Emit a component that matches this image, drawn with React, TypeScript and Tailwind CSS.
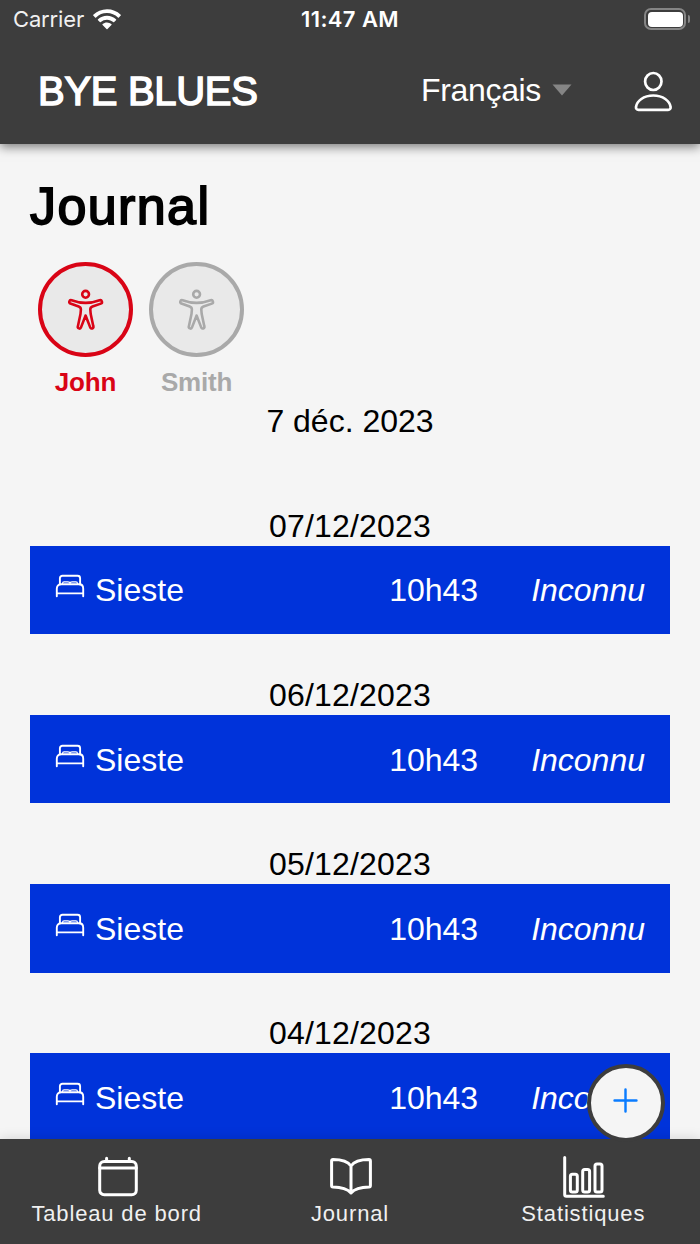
import type { ReactNode } from 'react';
import { IoAddOutline } from 'react-icons/io5';

type Entry = {
  date: string;
  label: string;
  time: string;
  status: string;
};

const entries: Entry[] = [
  { date: '07/12/2023', label: 'Sieste', time: '10h43', status: 'Inconnu' },
  { date: '06/12/2023', label: 'Sieste', time: '10h43', status: 'Inconnu' },
  { date: '05/12/2023', label: 'Sieste', time: '10h43', status: 'Inconnu' },
  { date: '04/12/2023', label: 'Sieste', time: '10h43', status: 'Inconnu' },
];

function PersonIcon() {
  return (
    <svg viewBox="0 0 40 42" className="h-[42px] w-10 shrink-0 fill-none stroke-current stroke-[2.7]">
      <ellipse cx="20.300" cy="11.500" rx="8.200" ry="8.500" />
      <path d="M5.500 39.800h29.600c1.800 0 2.700-1.200 2.500-2.800C36.800 31 30 25.500 20.300 25.500S3.800 31 3 37c-.2 1.600.7 2.800 2.500 2.800z" />
    </svg>
  );
}

function BodyIcon() {
  return (
    <svg viewBox="0 0 38 43" className="h-[43px] w-[38px] fill-none stroke-current stroke-[2.6]" strokeLinejoin="round">
      <circle cx="18.600" cy="6.300" r="3.400" />
      <path d="M4.600 12.300Q18.600 17.500 32.600 12.300A1.700 1.700 0 0 1 33.800 15.600L25.500 18.500Q23.300 19.300 23.300 21.500L23.700 26L26.300 38.300A1.600 1.600 0 0 1 23.200 39.400L18.600 27.500L14 39.400A1.600 1.600 0 0 1 10.900 38.300L13.500 26L13.900 21.500Q13.900 19.300 11.700 18.500L3.400 15.600A1.700 1.700 0 0 1 4.600 12.300Z" />
    </svg>
  );
}

function BedIcon() {
  return (
    <svg viewBox="0 0 30 26" className="mb-[8px] h-[26px] w-[30px] shrink-0 fill-none stroke-current stroke-[1.9]" strokeLinecap="round">
      <path d="M4.900 11.500V5.300a2.500 2.500 0 0 1 2.500-2.500h15.200a2.500 2.500 0 0 1 2.500 2.500v6.200" />
      <path d="M1.800 23.300v-7.500c0-2.700 1.400-4.500 4-4.500h18.400c2.600 0 4 1.800 4 4.500v7.500M1.800 20.400h26.400" />
      <path strokeWidth="1.200" d="M7.500 10.500c0-1 .6-1.600 1.600-1.600h3.700c1.200 0 2.200.7 2.200 1.800 0-1.100 1-1.800 2.200-1.800h3.700c1 0 1.600.6 1.600 1.600" />
    </svg>
  );
}

const tabs: { label: string; icon: ReactNode }[] = [
  {
    label: 'Tableau de bord',
    icon: (
      <>
        <rect x="4.700" y="7.600" width="36.600" height="33.100" rx="4.500" />
        <path d="M4.700 14.100h36.600M11.600 4.300v3.300M34.300 4.300v3.300" />
      </>
    ),
  },
  {
    label: 'Journal',
    icon: (
      <path d="M23 12C20 7.500 13 5.500 5 5.500Q3.600 5.500 3.600 7V31.600Q3.600 33 5 33.100C13 33.200 19 34.500 23 39C27 34.500 33 33.200 41 33.100Q42.400 33 42.400 31.600V7Q42.400 5.500 41 5.500C33 5.500 26 7.500 23 12V39" />
    ),
  },
  {
    label: 'Statistiques',
    icon: (
      <>
        <path d="M3.700 3.500v37q0 1.700 1.700 1.700h36.900" />
        <rect x="9.400" y="20.200" width="6.900" height="17.800" rx="2" />
        <rect x="21.700" y="15.500" width="6.900" height="22.500" rx="2" />
        <rect x="34" y="9.900" width="7" height="28.100" rx="2" />
      </>
    ),
  },
];

function StatusBar() {
  return (
    <div className="grid h-[38px] grid-cols-3 items-center pl-[13px] pr-[10px] font-[Inter,sans-serif] text-[22px] leading-none">
      <div className="flex items-center gap-[9px] text-[#f0f0f0]">
        <span className="tracking-[-0.150px]">Carrier</span>
        <svg viewBox="0 0 28 21" className="h-[21px] w-[28px] fill-white">
          <path d="M14 0.200C8.600 0.200 3.800 2.300 0.300 5.700a.6.6 0 0 0 0 .9l1.800 1.800c.3.3.7.3 1 0A15.600 15.600 0 0 1 14 4.100c4.200 0 8 1.600 10.900 4.300.3.300.7.300 1 0l1.800-1.800a.6.6 0 0 0 0-.9A19.600 19.600 0 0 0 14 .2z" />
          <path d="M14 6.800c-3.500 0-6.600 1.300-9 3.500a.7.7 0 0 0 0 1l1.800 1.800c.3.3.7.3 1 0A9.200 9.200 0 0 1 14 10.700c2.400 0 4.600.9 6.200 2.400.3.300.7.300 1 0l1.800-1.800a.7.7 0 0 0 0-1 13.200 13.200 0 0 0-9-3.500z" />
          <path d="M14 13.400c-1.700 0-3.200.6-4.400 1.600a.7.7 0 0 0 0 1l3.900 3.900c.3.300.7.300 1 0l3.900-3.900a.7.7 0 0 0 0-1 6.800 6.800 0 0 0-4.400-1.600z" />
        </svg>
      </div>
      <div className="mr-[3px] whitespace-nowrap text-center font-semibold tracking-[0.400px]">11:47 AM</div>
      <div className="flex items-center justify-end gap-[2px]">
        <div className="h-[22px] w-[42px] rounded-[7px] border-2 border-[#858585] p-[1.500px]">
          <div className="h-full w-full rounded-[4px] bg-white" />
        </div>
        <div className="h-2 w-[2px] rounded-r-full bg-[#858585]" />
      </div>
    </div>
  );
}

function Header() {
  return (
    <header className="relative z-10 h-[143.500px] shrink-0 bg-[#3d3d3d] text-white shadow-[0_3px_10px_rgba(0,0,0,0.5)]">
      <StatusBar />
      <div className="flex h-[105px] items-center pl-[38px] pr-[27px]">
        <h1 className="flex-1 whitespace-nowrap text-[40px] leading-none tracking-[-0.300px] [-webkit-text-stroke:1.500px_white]">BYE BLUES</h1>
        <button className="mb-[2px] mr-[61px] flex items-center gap-[11px] text-[32px] leading-none tracking-[-0.350px]">
          Français
          <svg viewBox="0 0 20 12" className="h-3 w-5 fill-[#858585]">
            <path d="M0.500 0.500h19L10 11.500z" />
          </svg>
        </button>
        <PersonIcon />
      </div>
    </header>
  );
}

function Avatar({ name, active }: { name: string; active?: boolean }) {
  return (
    <div className={active ? 'flex w-[95px] flex-col items-center text-[#d90416]' : 'flex w-[95px] flex-col items-center text-[#a9a9a9]'}>
      <div className="flex size-[95px] items-center justify-center rounded-full border-4 border-current bg-[#e9e9e9]">
        <BodyIcon />
      </div>
      <span className="mt-[10px] text-[26px] font-bold leading-[30px] tracking-[-0.200px]">{name}</span>
    </div>
  );
}

function JournalRow({ entry }: { entry: Entry }) {
  return (
    <li className="h-[169.300px]">
      <div className="h-[38px] text-center text-[32px] leading-[36px] tracking-[0.200px] text-black">{entry.date}</div>
      <div className="flex h-[88.500px] items-center bg-[#0033da] pl-[25px] pr-[25px] pt-px text-[32px] text-white">
        <BedIcon />
        <span className="ml-[10px] flex-1">{entry.label}</span>
        <span className="mr-[53px]">{entry.time}</span>
        <span className="italic">{entry.status}</span>
      </div>
    </li>
  );
}

export default function App() {
  return (
    <div className="relative flex h-[1244px] w-[700px] flex-col overflow-hidden bg-[#f5f5f5] font-['Liberation_Sans',Arial,sans-serif]">
      <Header />

      <main className="min-h-0 flex-1 overflow-hidden px-[30px] pt-[32px]">
        <h2 className="text-[52px] leading-[60px] tracking-[1.400px] text-black [-webkit-text-stroke:1.800px_black]">Journal</h2>
        <div className="mt-[26.500px] flex gap-4 pl-2">
          <Avatar name="John" active />
          <Avatar name="Smith" />
        </div>
        <div className="mt-[5px] text-center text-[32px] leading-[38px] text-black">7 déc. 2023</div>
        <ul className="mt-[67.500px]">
          {entries.map((entry) => (
            <JournalRow key={entry.date} entry={entry} />
          ))}
        </ul>
      </main>

      <button className="absolute left-[587px] top-[1064px] z-20 flex size-[78px] items-center justify-center rounded-full border-4 border-[#3d3d3d] bg-[#f5f5f5] text-[#0a7cff]">
        <IoAddOutline className="mb-[5px] mr-px size-[39px]" />
      </button>

      <nav className="relative z-10 grid h-[105px] shrink-0 grid-cols-3 bg-[#3d3d3d] text-white shadow-[0_0_12px_rgba(0,0,0,0.15)]">
        {tabs.map(({ label, icon }) => (
          <button key={label} className="flex flex-col items-center pt-[15px]">
            <svg viewBox="0 0 46 46" className="ml-[2px] size-[46px] fill-none stroke-current stroke-[3]" strokeLinecap="round" strokeLinejoin="round">
              {icon}
            </svg>
            <span className="mt-px text-[22px] leading-[26px] tracking-[0.850px] text-[#f0f0f0]">{label}</span>
          </button>
        ))}
      </nav>
    </div>
  );
}
